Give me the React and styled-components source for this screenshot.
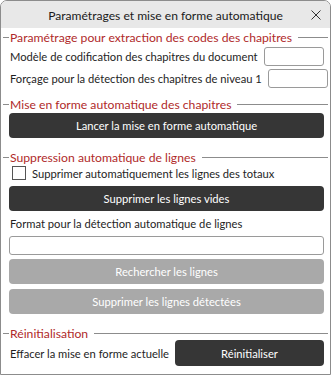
import React from "react";
import styled, { createGlobalStyle } from "styled-components";

const Global = createGlobalStyle`
  html, body { margin: 0; padding: 0; background: #ffffff; }
  body { font-family: Lato, "Noto Sans", sans-serif; color: #1e1e1e; }
  * { box-sizing: border-box; }
`;

const Window = styled.div`
  width: 331px;
  height: 375px;
  border: 1px solid #8c8c8c;
  border-radius: 7px 7px 0 0;
  overflow: hidden;
  background: #ffffff;
  display: flex;
  flex-direction: column;
`;

const TitleBar = styled.div`
  height: 27px;
  flex: none;
  background: #e8e8e8;
  display: grid;
  grid-template-columns: 36px 1fr 36px;
  align-items: center;
`;

const Title = styled.div`
  grid-column: 2;
  text-align: center;
  font-size: 12.1px;
  color: #1a1a1a;
  white-space: nowrap;
  padding-top: 1px;
`;

const Close = styled.button`
  grid-column: 3;
  justify-self: end;
  margin-right: 7px;
  width: 14px;
  height: 14px;
  padding: 0;
  border: 0;
  background: none;
  display: flex;
  align-items: center;
  justify-content: center;
  color: #333;
`;

const Content = styled.div`
  padding: 0 6px 0 8px;
  display: flex;
  flex-direction: column;
`;

const SectionHeader = styled.div`
  margin: ${(p) => p.$top}px -4px 0 -6px;
  height: 14px;
  display: flex;
  align-items: center;
  font-size: 12.2px;
  color: #b02a2a;
  white-space: nowrap;
  &::before {
    content: "";
    width: 6px;
    height: 1px;
    background: #8c8c8c;
    margin-right: 1px;
  }
  &::after {
    content: "";
    flex: 1;
    height: 1px;
    background: #8c8c8c;
    margin-left: 6px;
  }
`;

const Row = styled.div`
  margin-top: ${(p) => p.$top || 0}px;
  height: ${(p) => p.$h || 22}px;
  display: flex;
  align-items: center;
  justify-content: space-between;
  gap: 6px;
`;

const Label = styled.span`
  font-size: 11.2px;
  padding-left: 1px;
  white-space: nowrap;
`;

const TextInput = styled.input`
  width: ${(p) => p.$w || "100%"};
  height: 19px;
  margin-top: ${(p) => p.$top || 0}px;
  border: 1px solid #9a9a9a;
  border-radius: 3px;
  background: #fff;
  flex: none;
  outline: none;
`;

const Button = styled.button`
  margin-top: ${(p) => p.$top || 0}px;
  width: ${(p) => p.$w || "100%"};
  height: ${(p) => p.$h || 25}px;
  flex: none;
  border: 0;
  border-radius: 4px;
  background: ${(p) => (p.$disabled ? "#a9a9a9" : "#363636")};
  color: #ffffff;
  font-family: inherit;
  font-size: 11.2px;
  padding: 0;
`;

const CheckRow = styled.label`
  margin-top: ${(p) => p.$top || 0}px;
  height: 16px;
  display: flex;
  align-items: center;
  gap: 6px;
  padding-left: 3px;
  font-size: 11.2px;
`;

const Box = styled.span`
  width: 14px;
  height: 14px;
  border: 1px solid #555;
  background: #fff;
  flex: none;
`;

const FieldLabel = styled.div`
  margin-top: ${(p) => p.$top || 0}px;
  height: 16px;
  line-height: 16px;
  font-size: 11.2px;
  padding-left: 1px;
`;

export default function App() {
  return (
    <>
      <Global />
      <Window>
        <TitleBar>
          <Title>Paramétrages et mise en forme automatique</Title>
          <Close aria-label="Fermer">
            <svg width="10" height="10" viewBox="0 0 10 10">
              <path d="M0.5 0.5 L9.5 9.5 M9.5 0.5 L0.5 9.5" stroke="#333" strokeWidth="1" fill="none" />
            </svg>
          </Close>
        </TitleBar>
        <Content>
          <SectionHeader $top={2}>Paramétrage pour extraction des codes des chapitres</SectionHeader>
          <Row $top={1}>
            <Label>Modèle de codification des chapitres du document</Label>
            <TextInput $w="60px" />
          </Row>
          <Row>
            <Label>Forçage pour la détection des chapitres de niveau 1</Label>
            <TextInput $w="60px" />
          </Row>

          <SectionHeader $top={8}>Mise en forme automatique des chapitres</SectionHeader>
          <Button $top={2}>Lancer la mise en forme automatique</Button>

          <SectionHeader $top={12}>Suppression automatique de lignes</SectionHeader>
          <CheckRow $top={1}>
            <Box />
            Supprimer automatiquement les lignes des totaux
          </CheckRow>
          <Button $top={5}>Supprimer les lignes vides</Button>
          <FieldLabel $top={5}>Format pour la détection automatique de lignes</FieldLabel>
          <TextInput $top={4} />
          <Button $top={4} $disabled>Rechercher les lignes</Button>
          <Button $top={5} $disabled>Supprimer les lignes détectées</Button>

          <SectionHeader $top={12}>Réinitialisation</SectionHeader>
          <Row $h={26}>
            <Label>Effacer la mise en forme actuelle</Label>
            <Button $w="149px" $h={26}>Réinitialiser</Button>
          </Row>
        </Content>
      </Window>
    </>
  );
}
